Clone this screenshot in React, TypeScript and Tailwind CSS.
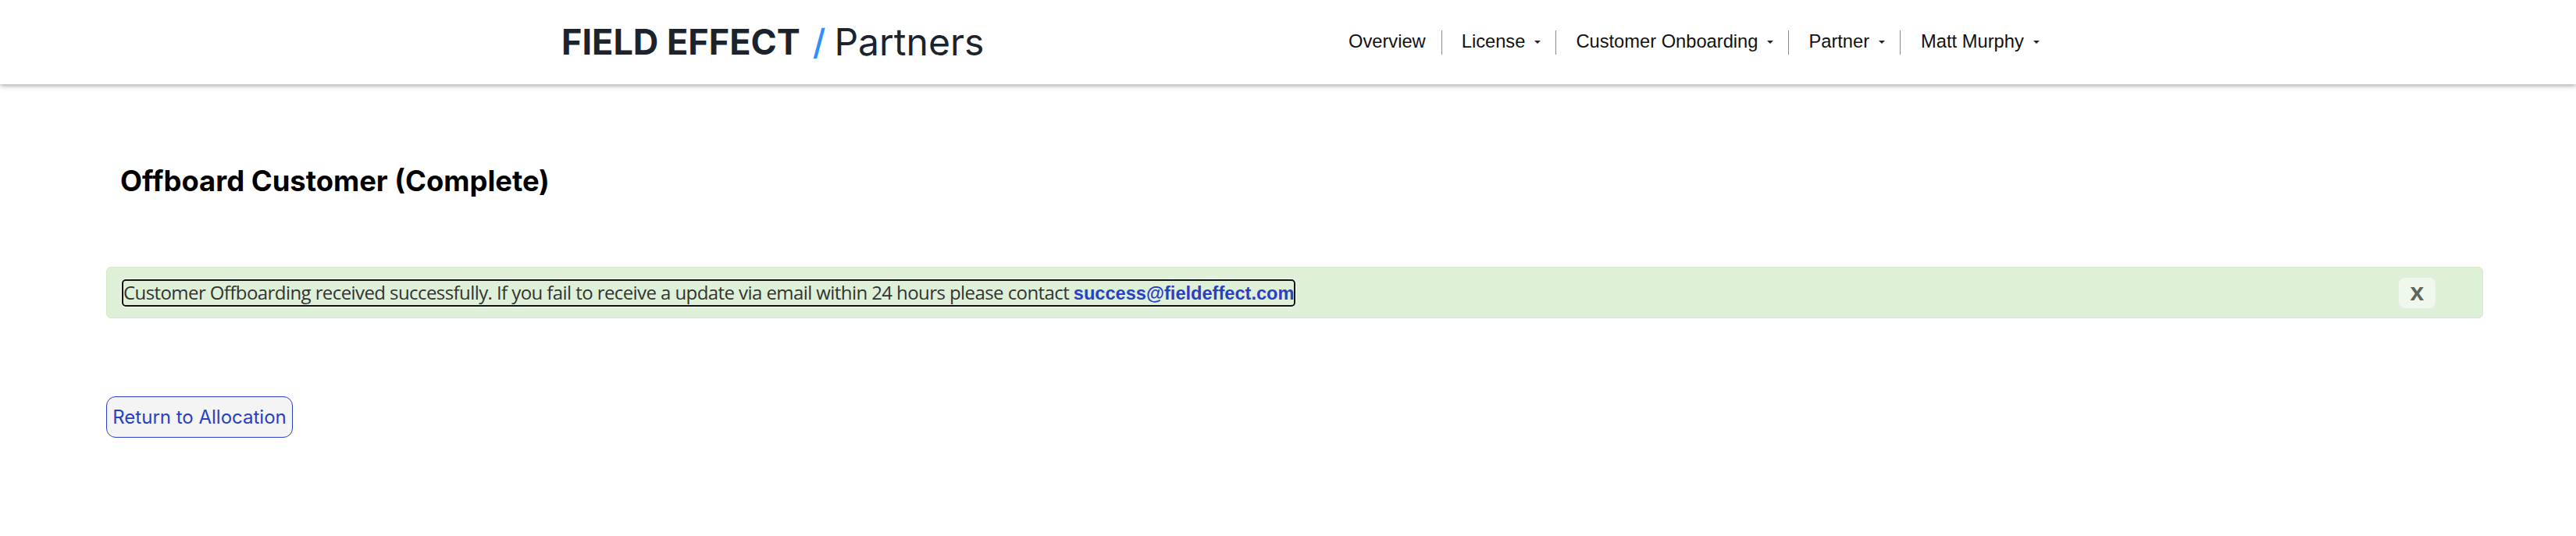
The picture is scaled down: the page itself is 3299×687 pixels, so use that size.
import { ReactNode } from "react";

const navItems = [
  { label: "Overview", caret: false, cls: "pr-[20px]" },
  { label: "License", caret: true, cls: "pl-[25px] pr-[19px]" },
  { label: "Customer Onboarding", caret: true, cls: "pl-[25px] pr-[19px]" },
  { label: "Partner", caret: true, cls: "pl-[25px] pr-[19px]" },
  { label: "Matt Murphy", caret: true, cls: "pl-[26px]" },
];

function Caret() {
  return <span className="ml-[12px] inline-block border-x-[4px] border-t-[4px] border-x-transparent border-t-[#222]" />;
}

function NavItem({ children, caret, cls, last }: { children: ReactNode; caret: boolean; cls: string; last: boolean }) {
  return (
    <div className={`flex h-[31px] items-center whitespace-nowrap font-['Liberation_Sans',sans-serif] text-[23.7px] text-[#111] ${cls} ${last ? "" : "border-r border-[#8a8a8a]"}`}>
      {children}
      {caret && <Caret />}
    </div>
  );
}

export default function App() {
  return (
    <div className="min-h-[687px] bg-white font-['Inter',sans-serif]">
      <header className="flex h-[108px] items-center bg-white pl-[719px] shadow-[0_2px_6px_rgba(0,0,0,0.35)]">
        <div className="flex w-[1008px] items-center whitespace-nowrap text-[#1b242d]">
          <span className="text-[45px] font-bold">FIELD EFFECT</span>
          <span className="ml-[16px] text-[45px] font-medium text-[#2f8fff]">/</span>
          <span className="ml-[11px] text-[48px] font-normal">Partners</span>
        </div>
        <nav className="flex items-center">
          {navItems.map((item, i) => (
            <NavItem key={item.label} caret={item.caret} cls={item.cls} last={i === navItems.length - 1}>
              {item.label}
            </NavItem>
          ))}
        </nav>
      </header>

      <main className="pl-[136px] pr-[119px]">
        <h1 className="pl-[18px] pt-[102px] text-[36.4px] leading-[44px] font-bold text-black">Offboard Customer (Complete)</h1>

        <div className="mt-[88px] flex h-[66px] items-center justify-between rounded-[6px] border border-[#d6e9c6] bg-[#dff0d8] pl-[21px] pr-[60px]">
          <span className="rounded-[3px] font-['Open_Sans',sans-serif] text-[24px] leading-[30px] tracking-[-0.58px] text-[#333] shadow-[0_0_0_3px_white] outline-2 outline-[#111]">
            Customer Offboarding received successfully. If you fail to receive a update via email within 24 hours please contact{" "}
            <a href="#" className="font-['Liberation_Sans',sans-serif] text-[23.6px] font-bold tracking-normal text-[#2a40c4]">
              success@fieldeffect.com
            </a>
          </span>
          <button className="flex h-[39px] w-[47px] items-center justify-center rounded-[8px] bg-[#f0f8ee] pb-[2px] font-['Liberation_Sans',sans-serif] text-[32px] leading-none font-bold text-[#5f665c]">
            x
          </button>
        </div>

        <button className="mt-[100px] flex h-[53px] w-[239px] items-center justify-center rounded-[12px] border border-[#2a40c4] bg-[#f4f4f4] text-[24px] text-[#2a40c4]">
          Return to Allocation
        </button>
      </main>
    </div>
  );
}
